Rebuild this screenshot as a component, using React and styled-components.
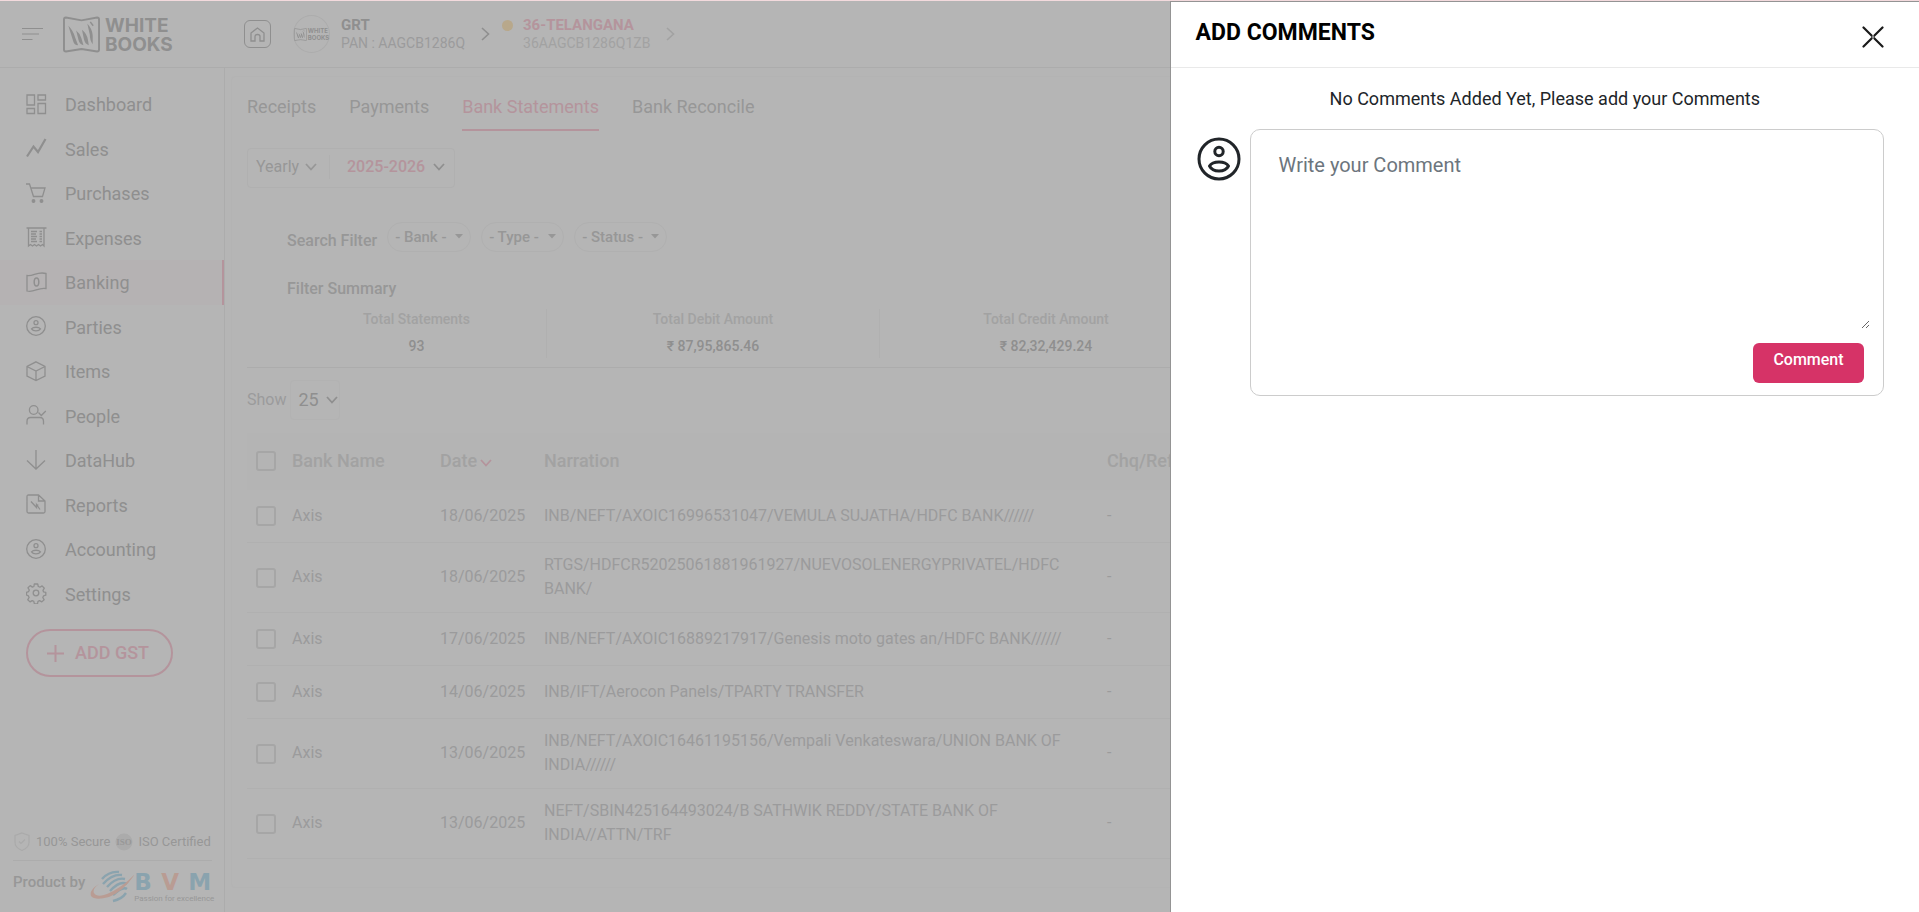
import React from 'react'

import styled, { createGlobalStyle } from 'styled-components';

const colors = {
  page: '#b5b5b5',
  line: '#acacac',
  faint: '#b0b0b0',
  dark: '#8f8f8f',
  text: '#979797',
  muted: '#9b9b9c',
  light: '#a2a2a2',
  pink: '#b4949c',
  brand: '#d63367',
};

const menu = [
  { label: 'Dashboard', icon: 'dashboard' },
  { label: 'Sales', icon: 'sales' },
  { label: 'Purchases', icon: 'cart' },
  { label: 'Expenses', icon: 'receipt' },
  { label: 'Banking', icon: 'banking', active: true },
  { label: 'Parties', icon: 'user' },
  { label: 'Items', icon: 'box' },
  { label: 'People', icon: 'people' },
  { label: 'DataHub', icon: 'down' },
  { label: 'Reports', icon: 'report' },
  { label: 'Accounting', icon: 'user' },
  { label: 'Settings', icon: 'settings' },
];

const tabs = ['Receipts', 'Payments', 'Bank Statements', 'Bank Reconcile'];

const filters = ['Bank', 'Type', 'Status'];

const summary = [
  { label: 'Total Statements', value: '93' },
  { label: 'Total Debit Amount', value: '₹ 87,95,865.46' },
  { label: 'Total Credit Amount', value: '₹ 82,32,429.24' },
];

const statements = [
  { date: '18/06/2025', narration: 'INB/NEFT/AXOIC16996531047/VEMULA SUJATHA/HDFC BANK//////' },
  { date: '18/06/2025', narration: 'RTGS/HDFCR52025061881961927/NUEVOSOLENERGYPRIVATEL/HDFC BANK/' },
  { date: '17/06/2025', narration: 'INB/NEFT/AXOIC16889217917/Genesis moto gates an/HDFC BANK//////' },
  { date: '14/06/2025', narration: 'INB/IFT/Aerocon Panels/TPARTY TRANSFER' },
  { date: '13/06/2025', narration: 'INB/NEFT/AXOIC16461195156/Vempali Venkateswara/UNION BANK OF INDIA//////' },
  { date: '13/06/2025', narration: 'NEFT/SBIN425164493024/B SATHWIK REDDY/STATE BANK OF INDIA//ATTN/TRF' },
];

const shapes = {
  dashboard: <path d="M1 1h7.500v10H1zM12 1h7.500v5H12zM1 14.500h7.500v5H1zM12 9.500h7.500v10H12z" />,
  sales: <path d="M1 18.500l6.500-10 4.500 5.500L19.500 1" strokeWidth="2.200" />,
  cart: (
    <>
      <path d="M0 1h3.500l4 12.500h9L19 5H5" />
      <circle cx="7.500" cy="18" r="1.300" fill="currentColor" />
      <circle cx="15.500" cy="18" r="1.300" fill="currentColor" />
    </>
  ),
  receipt: (
    <>
      <path d="M.5 1h20M2.500 1v18l2-1.500 2 1.500 2-1.500 2 1.500 2-1.500 2 1.500 2-1.500 1.500 1.500V1" />
      <path d="M5 4.500h6M5 7h5M5 9.500h6M5 12h5M5 14.500h6M13.500 4.500h2.500M13.500 7h2.500M13.500 9.500h2.500M13.500 12h2.500M13.500 14.500h2.500" />
    </>
  ),
  banking: (
    <>
      <path d="M1 3.500C7 5 11-1 20 1.500v15C12 15 8 21 1 19z" />
      <ellipse cx="10.500" cy="10" rx="2.300" ry="4" strokeWidth="1.500" />
    </>
  ),
  user: (
    <>
      <circle cx="10" cy="10" r="9.300" />
      <circle cx="10" cy="6.700" r="2" />
      <path d="M5.500 12.900c1.800-2.200 7.200-2.200 9 0-1.800 2.700-7.200 2.700-9 0z" />
    </>
  ),
  box: <path d="M10 .8l9 4.700v9.500l-9 4.500-9-4.500V5.500zM1 5.500l9 4.500 9-4.500M10 10v9.500" />,
  people: (
    <>
      <circle cx="7.700" cy="5" r="4.300" />
      <path d="M1 19.500v-3c0-2.500 1.300-4 3.500-4h9.500c2.200 0 3.500 1.500 3.500 4v3M12.500 7.500l2.800 3 4.500-4.500" />
    </>
  ),
  down: <path d="M10 0v19M1 10.500l9 8.500 9-8.500" />,
  report: (
    <>
      <path d="M12.500 1H2.500Q1 1 1 2.500v15Q1 19 2.500 19h15q1.500 0 1.500-1.500V7zM12.500 1v6H19" />
      <path d="M5 7.500l5.500 6V10.500l3.500 5M12 10.500l-1 2" />
    </>
  ),
  settings: (
    <>
      <circle cx="10" cy="10" r="2.800" />
      <path d="M8.300 1h3.400l.6 2.500 1.600.7 2.200-1.300 2.200 2.300-1.300 2.200.6 1.500 2.200.5v2.800l-2.300.7-.7 1.600 1.300 2.200-2.300 2.200-2.200-1.300-1.600.7-.5 2.500H8.400l-.6-2.500-1.600-.7-2.200 1.300-2.200-2.200 1.300-2.200-.7-1.600L.5 12V9.300L2.600 8.600l.7-1.600-1.300-2.200 2.200-2.200 2.200 1.500 1.500-.6z" strokeLinejoin="round" />
    </>
  ),
};

const Icon = ({ name }) => (
  <svg width="21" height="21" viewBox="0 0 21 21" fill="none" stroke="currentColor" strokeWidth="1.300" aria-hidden="true">
    {shapes[name]}
  </svg>
);

const Chevron = ({ right }) => (
  right ? (
    <svg width="9" height="14" viewBox="0 0 9 14" fill="none" stroke="currentColor" strokeWidth="1.600" aria-hidden="true">
      <path d="M1 1l6.500 6L1 13" />
    </svg>
  ) : (
    <svg width="12" height="8" viewBox="0 0 12 8" fill="none" stroke="currentColor" strokeWidth="1.800" aria-hidden="true">
      <path d="M1 1l5 5.500L11 1" />
    </svg>
  )
);

const BookMark = ({ size }) => (
  <svg width={size} height={size} viewBox="0 0 38 38" fill="none" stroke="currentColor" aria-hidden="true">
    <path d="M3 1.500l16 3 16-3q2 0 2 2v31q0 2-2 2l-16-2.500-16 2.500q-2 0-2-2v-31q0-2 2-2z" strokeWidth="2" />
    <path d="M5.500 10q5 5 7 12l3 8q-4 0-5-4zM13.500 15q4 3 5.500 8l2 7q-4-1-5-5zM19.500 14q5 4 6 10l1 6q-4-1-5-6zM25 8q5 5 5.500 12v9q-3-4-3-10z" fill="currentColor" stroke="none" />
    <path d="M28 6l3 4" strokeWidth="1.500" />
  </svg>
);

const Select = ({ label, children, options }) => (
  <SelectWrap>
    <select aria-label={label}>
      {options.map((option) => <option key={option}>{option}</option>)}
    </select>
    {children}
  </SelectWrap>
);

const Header = () => (
  <StyledHeader>
    <MenuButton aria-label="Toggle menu">
      <svg width="22" height="14" viewBox="0 0 22 14" stroke="currentColor" strokeWidth="1.200">
        <path d="M0 1.500h21M0 7h17M0 12.500h10.500" />
      </svg>
    </MenuButton>
    <Logo href="#home">
      <BookMark size={37} />
      <span>WHITE<br />BOOKS</span>
    </Logo>
    <HomeButton aria-label="Home">
      <svg width="15" height="15" viewBox="0 0 15 15" fill="none" stroke="currentColor" strokeWidth="1.300">
        <path d="M1 6l6.500-5L14 6v8h-4V9.500Q10 7.500 7.500 7.500T5 9.500V14H1z" />
      </svg>
    </HomeButton>
    <CompanyLogo>
      <BookMark size={13} />
      <span>WHITE<br />BOOKS</span>
    </CompanyLogo>
    <Company>
      <h2>GRT</h2>
      <p>PAN : AAGCB1286Q</p>
    </Company>
    <Crumb><Chevron right /></Crumb>
    <StatusDot />
    <Company $pink>
      <h2>36-TELANGANA</h2>
      <p>36AAGCB1286Q1ZB</p>
    </Company>
    <Crumb $faint><Chevron right /></Crumb>
  </StyledHeader>
);

const Sidebar = () => (
  <StyledSidebar>
    <MenuList>
      {menu.map((item) => (
        <MenuItem key={item.label} href={`#${item.label}`} $active={item.active}>
          <Icon name={item.icon} />
          <span>{item.label}</span>
        </MenuItem>
      ))}
    </MenuList>

    <AddButton>
      <svg width="17" height="17" viewBox="0 0 17 17" stroke="currentColor" strokeWidth="2" aria-hidden="true">
        <path d="M8.500 0v17M0 8.500h17" />
      </svg>
      ADD GST
    </AddButton>

    <SideFooter>
      <Badges>
        <svg width="18" height="20" viewBox="0 0 18 20" fill="none" stroke="#aaaaaa" strokeWidth="1.200" aria-hidden="true">
          <path d="M9 1l7 2.500v7q0 5-7 8-7-3-7-8v-7zM6 9.500l2 2 4-4" />
        </svg>
        <span>100% Secure</span>
        <svg width="18" height="18" viewBox="0 0 18 18" aria-hidden="true">
          <circle cx="9" cy="9" r="8.500" fill="#ababab" />
          <text x="9" y="12" textAnchor="middle" fontFamily="Liberation Serif, serif" fontWeight="700" fontSize="9" fill="#989898">ISO</text>
        </svg>
        <span>ISO Certified</span>
      </Badges>
      <Product>
        <strong>Product by</strong>
        <BvmLogo>
          <svg width="44" height="33" viewBox="0 0 44 33" aria-hidden="true">
            <path
              d="M12 9Q19 1 29 2M13 14Q22 4 32 5M17 17Q26 7 35 9M20 21Q30 10 37 14M23 25Q33 16 37 19M23 31Q32 29 36 23"
              fill="none"
              stroke="#8aa3ae"
              strokeWidth="2.400"
            />
            <path d="M45 4Q32 18 17 24 7 28 4 23 2 19 9 14-1 20 1 26 5 31 19 27 34 21 45 4z" fill="#b99c93" />
          </svg>
          <div>
            <b><span>B</span><i>V</i><span>M</span></b>
            <small>Passion for excellence</small>
          </div>
        </BvmLogo>
      </Product>
    </SideFooter>
  </StyledSidebar>
);

const Statements = () => (
  <Table>
    <colgroup>
      <col className="check" />
      <col className="bank" />
      <col className="date" />
      <col className="narration" />
      <col />
    </colgroup>
    <thead>
      <tr>
        <th><input type="checkbox" aria-label="Select all statements" /></th>
        <th>Bank Name</th>
        <th>Date<SortMark><Chevron /></SortMark></th>
        <th>Narration</th>
        <th>Chq/Ref No</th>
      </tr>
    </thead>
    <tbody>
      {statements.map((row) => (
        <tr key={row.narration}>
          <td><input type="checkbox" aria-label={`Select ${row.narration}`} /></td>
          <td>Axis</td>
          <td>{row.date}</td>
          <td>{row.narration}</td>
          <td>-</td>
        </tr>
      ))}
    </tbody>
  </Table>
);

const Banking = () => (
  <Card>
    <Tabs>
      {tabs.map((tab) => (
        <Tab key={tab} href={`#${tab}`} $active={tab === 'Bank Statements'}>{tab}</Tab>
      ))}
    </Tabs>

    <Period>
      <PeriodPart>
        <Select label="Period" options={['Yearly']}><Chevron /></Select>
      </PeriodPart>
      <PeriodPart $year>
        <Select label="Year" options={['2025-2026']}><Chevron /></Select>
      </PeriodPart>
    </Period>

    <Filters>
      <h3>Search Filter</h3>
      {filters.map((filter) => (
        <Pill key={filter}>
          <Select label={filter} options={[`- ${filter} -`]}>
            <svg width="8" height="7" viewBox="0 0 8 7" fill="currentColor" aria-hidden="true"><path d="M0 0h8L4 4.500z" /></svg>
          </Select>
        </Pill>
      ))}
    </Filters>

    <Summary>
      <h3>Filter Summary</h3>
      <div className="totals">
        {summary.map((item) => (
          <div className="total" key={item.label}>
            <p>{item.label}</p>
            <strong>{item.value}</strong>
          </div>
        ))}
      </div>
    </Summary>

    <PageSize>
      <span>Show</span>
      <div>
        <Select label="Rows per page" options={['25']}><Chevron /></Select>
      </div>
    </PageSize>

    <Statements />
  </Card>
);

const Comments = () => (
  <Drawer role="dialog" aria-label="Add comments">
    <DrawerHeader>
      <h1>ADD COMMENTS</h1>
      <button aria-label="Close">
        <svg width="22" height="22" viewBox="0 0 22 22" fill="none" stroke="#1a1a1a" strokeWidth="2.200" strokeLinecap="round">
          <path d="M1.500 1.500l8.300 8.300M20.500 1.500l-8.300 8.300M1.500 20.500l8.300-8.300M20.500 20.500l-8.300-8.300M10.500 10.500h1M10.500 11.500h1" />
          <path d="M11 9.800v2.400" stroke="#ffffff" strokeWidth="1" />
        </svg>
      </button>
    </DrawerHeader>

    <Empty>No Comments Added Yet, Please add your Comments</Empty>

    <CommentRow>
      <svg width="44" height="44" viewBox="0 0 44 44" fill="none" stroke="#212529" strokeWidth="3" aria-hidden="true">
        <circle cx="22" cy="22" r="20" />
        <circle cx="22" cy="14.500" r="4.200" />
        <path d="M12.500 29Q15 25 22 25t9.500 4Q29 34 22 34t-9.500-5z" strokeLinejoin="round" />
      </svg>
      <CommentBox>
        <textarea aria-label="Comment" placeholder="Write your Comment" />
        <button>Comment</button>
      </CommentBox>
    </CommentRow>
  </Drawer>
);

export default function App() {
  return (
    <>
      <GlobalStyle />
      <Page>
        <Header />
        <Body>
          <Sidebar />
          <Content>
            <Banking />
          </Content>
        </Body>
      </Page>
      <Comments />
    </>
  )
}

const GlobalStyle = createGlobalStyle`
  * {
    box-sizing: border-box;
  }

  body {
    margin: 0;
    background: ${colors.page};
    color: ${colors.text};
    font-family: Roboto, "Noto Sans", sans-serif;
    font-size: 16px;
    line-height: 24px;
    overflow: hidden;
  }

  h1, h2, h3, p {
    margin: 0;
  }

  a {
    color: inherit;
    text-decoration: none;
  }

  button, select, textarea {
    font: inherit;
    color: inherit;
    background: none;
    border: 0;
    padding: 0;
    margin: 0;
  }

  svg {
    display: block;
    flex-shrink: 0;
  }
`;

const Page = styled.div`
  display: flex;
  flex-direction: column;
  height: 100vh;
  border-top: 1px solid #f3dadd;
`;

const StyledHeader = styled.header`
  display: flex;
  align-items: center;
  height: 67px;
  flex-shrink: 0;
  border-bottom: 1px solid ${colors.line};
`;

const MenuButton = styled.button`
  margin-left: 22px;
  color: ${colors.dark};
`;

const Logo = styled.a`
  display: flex;
  align-items: center;
  gap: 5px;
  width: 181px;
  margin-left: 19px;
  color: ${colors.dark};
  font: 700 19px/19px Inter, sans-serif;

  span {
    padding-top: 2px;
  }
`;

const HomeButton = styled.button`
  display: grid;
  place-items: center;
  width: 27px;
  height: 28px;
  border: 1px solid ${colors.dark};
  border-radius: 6px;
  color: ${colors.dark};
`;

const CompanyLogo = styled.div`
  display: flex;
  align-items: center;
  justify-content: center;
  gap: 1px;
  width: 37px;
  height: 38px;
  margin: 0 11px 0 22px;
  border: 1px solid ${colors.line};
  border-radius: 50%;
  color: ${colors.dark};
  font: 700 6px/7px Inter, sans-serif;
`;

const Company = styled.div`
  h2 {
    font-size: 15px;
    font-weight: 700;
    line-height: 17px;
    color: ${({ $pink }) => ($pink ? colors.pink : colors.dark)};
  }

  p {
    font-size: 14px;
    line-height: 18px;
    color: ${({ $pink }) => ($pink ? colors.light : colors.muted)};
  }
`;

const Crumb = styled.span`
  margin-left: 16px;
  color: ${({ $faint }) => ($faint ? colors.light : colors.dark)};
`;

const StatusDot = styled.span`
  width: 11px;
  height: 11px;
  margin: 0 10px 18px 12px;
  border-radius: 50%;
  background: #b8a88b;
`;

const Body = styled.div`
  display: flex;
  flex: 1;
  min-height: 0;
`;

const StyledSidebar = styled.nav`
  display: flex;
  flex-direction: column;
  width: 225px;
  flex-shrink: 0;
  padding-top: 14px;
  border-right: 1px solid ${colors.line};
`;

const MenuList = styled.div`
  display: grid;
  grid-template-rows: repeat(12, 1fr);
  height: 534px;
`;

const MenuItem = styled.a`
  display: flex;
  align-items: center;
  gap: 18px;
  padding-left: 26px;
  font-size: 18px;
  color: ${colors.dark};
  border-right: 2px solid ${({ $active }) => ($active ? colors.pink : 'transparent')};
  background: ${({ $active }) => ($active ? '#b5b2b3' : 'none')};

  span {
    padding-top: 2px;
  }
`;

const AddButton = styled.button`
  display: flex;
  align-items: center;
  gap: 11px;
  width: 147px;
  height: 48px;
  margin: 13px 0 0 26px;
  padding-left: 19px;
  border: 2px solid ${colors.pink};
  border-radius: 24px;
  color: ${colors.pink};
  font-size: 18px;
  font-weight: 500;
`;

const SideFooter = styled.div`
  margin: auto 12px 9px 13px;
`;

const Badges = styled.div`
  display: flex;
  align-items: center;
  gap: 5px;
  padding-bottom: 6px;
  border-bottom: 1px solid ${colors.line};
  font-size: 13px;
  color: ${colors.text};
  white-space: nowrap;
`;

const Product = styled.div`
  display: flex;
  align-items: flex-start;
  gap: 5px;
  padding-top: 9px;

  strong {
    font-size: 15px;
    font-weight: 500;
    white-space: nowrap;
  }
`;

const BvmLogo = styled.div`
  display: flex;

  b {
    display: flex;
    justify-content: space-between;
    width: 77px;
    font: 700 23px/24px "DejaVu Sans", sans-serif;
    color: #8aa3ae;
  }

  i {
    font-style: normal;
    color: #b99c93;
  }

  small {
    display: block;
    font-size: 8px;
    line-height: 9px;
    color: ${colors.text};
    white-space: nowrap;
  }
`;

const Content = styled.main`
  flex: 1;
  min-width: 0;
  padding: 8px 16px 24px 6px;
`;

const Card = styled.section`
  height: 100%;
  padding: 0 15px;
  border: 1px solid #b3b3b3;
  border-radius: 4px;
`;

const Tabs = styled.div`
  display: flex;
  gap: 33px;
  padding-top: 12px;
`;

const Tab = styled.a`
  height: 42px;
  padding-top: 6px;
  font-size: 18px;
  border-bottom: 2px solid ${({ $active }) => ($active ? colors.pink : 'transparent')};
  color: ${({ $active }) => ($active ? colors.pink : colors.text)};
`;

const SelectWrap = styled.span`
  display: grid;
  align-items: center;

  select {
    grid-area: 1 / 1;
    appearance: none;
    width: 100%;
    outline: 0;
  }

  svg {
    grid-area: 1 / 1;
    justify-self: end;
    pointer-events: none;
  }
`;

const Period = styled.div`
  display: flex;
  align-items: center;
  width: fit-content;
  height: 40px;
  margin-top: 17px;
  padding-bottom: 2px;
  border: 1px solid ${colors.faint};
  border-radius: 4px;
`;

const PeriodPart = styled.div`
  width: ${({ $year }) => ($year ? '125px' : '81px')};
  padding: 0 ${({ $year }) => ($year ? '9px 0 17px' : '12px 0 8px')};
  border-left: ${({ $year }) => ($year ? `1px solid ${colors.faint}` : '0')};
  color: ${({ $year }) => ($year ? colors.pink : colors.text)};
  font-weight: ${({ $year }) => ($year ? 500 : 400)};

  svg {
    color: ${({ $year }) => ($year ? colors.dark : colors.text)};
  }
`;

const Filters = styled.div`
  display: flex;
  align-items: center;
  gap: 10px;
  margin: 33px 0 0 40px;

  h3 {
    padding-top: 8px;
    font-size: 16px;
    font-weight: 500;
  }
`;

const Pill = styled.div`
  height: 30px;
  padding: 2px 7px;
  border: 1px solid ${colors.faint};
  border-radius: 15px;
  font-size: 15px;
  font-weight: 500;

  select {
    padding-right: 16px;
  }
`;

const Summary = styled.div`
  padding: 24px 8px 9px 40px;
  border-bottom: 1px solid ${colors.line};

  h3 {
    font-size: 16px;
    font-weight: 500;
  }

  .totals {
    display: grid;
    grid-template-columns: 260px repeat(4, 1fr);
    margin-top: 8px;
  }

  .total {
    height: 49px;
    text-align: center;
    border-right: 1px solid ${colors.faint};
    font-size: 14px;
  }

  .total p {
    line-height: 20px;
    color: ${colors.light};
    font-weight: 500;
  }

  .total strong {
    display: block;
    padding-top: 5px;
    font-weight: 500;
    color: ${colors.dark};
  }
`;

const PageSize = styled.div`
  display: flex;
  align-items: center;
  gap: 4px;
  margin-top: 12px;
  color: ${colors.muted};

  div {
    width: 50px;
    height: 40px;
    padding: 7px 1px 7px 7px;
    border: 1px solid #b2b2b2;
    border-radius: 4px;
    font-size: 18px;
    color: ${colors.dark};
  }
`;

const Table = styled.table`
  width: 100%;
  margin-top: 13px;
  border-collapse: separate;
  border-spacing: 0;
  table-layout: fixed;
  text-align: left;

  .check { width: 45px; }
  .bank { width: 148px; }
  .date { width: 104px; }
  .narration { width: 563px; }

  th {
    height: 57px;
    padding: 0 0 2px;
    background: #b4b4b4;
    color: ${colors.light};
    font-size: 18px;
    font-weight: 500;
  }

  td {
    height: 53px;
    padding: 10px 0 11px;
    border-bottom: 1px solid ${colors.faint};
    color: ${colors.muted};
  }

  td:nth-child(4) {
    padding-right: 16px;
  }

  input {
    appearance: none;
    display: block;
    width: 20px;
    height: 20px;
    margin: 1px 0 0 9px;
    border: 2px solid #a6a6a6;
    border-radius: 3px;
  }
`;

const SortMark = styled.span`
  display: inline-block;
  margin-left: 3px;
  color: ${colors.pink};
`;

const Drawer = styled.aside`
  position: fixed;
  top: 1px;
  right: 0;
  bottom: 0;
  width: calc(39% + 1px);
  background: #ffffff;
  border: 1px solid #949494;
  border-width: 1px 0 0 1px;
  color: #212529;
`;

const DrawerHeader = styled.div`
  display: flex;
  justify-content: space-between;
  height: 66px;
  padding: 16px 35px 0 25px;
  border-bottom: 1px solid #e9e9e9;

  h1 {
    font-size: 23px;
    font-weight: 700;
    line-height: 30px;
    color: #000000;
  }

  button {
    height: 22px;
    margin-top: 8px;
  }
`;

const Empty = styled.p`
  padding-top: 19px;
  font-size: 18px;
  text-align: center;
`;

const CommentRow = styled.div`
  display: flex;
  align-items: flex-start;
  gap: 9px;
  margin: 18px 35px 0 26px;

  & > svg {
    margin-top: 8px;
  }
`;

const CommentBox = styled.div`
  display: flex;
  flex-direction: column;
  flex: 1;
  height: 267px;
  padding: 12px 13px 0 12px;
  border: 1px solid #cccccc;
  border-radius: 10px;

  textarea {
    display: block;
    width: 100%;
    height: 187px;
    padding: 8px 16px;
    font-size: 20px;
    line-height: 30px;
    outline: 0;
  }

  textarea::placeholder {
    color: #6c757d;
  }

  button {
    align-self: flex-end;
    width: 111px;
    height: 40px;
    margin: 14px 6px 0 0;
    padding-bottom: 7px;
    border-radius: 6px;
    background: ${colors.brand};
    color: #ffffff;
    font-weight: 500;
  }
`;
